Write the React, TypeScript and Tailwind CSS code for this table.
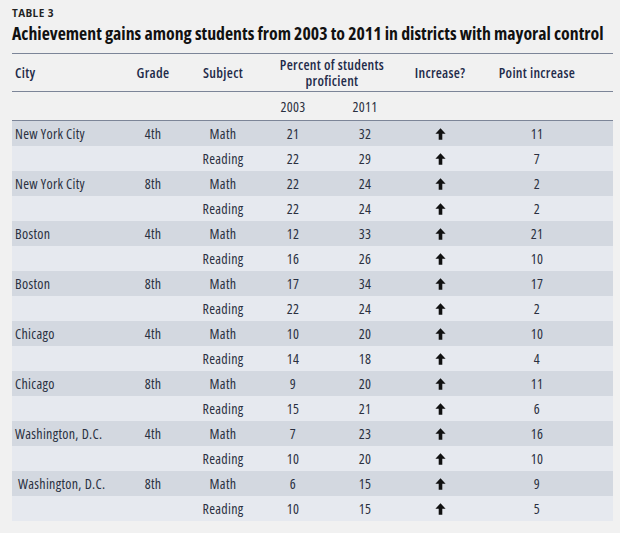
import React from 'react'

const rows = [
  { city: 'New York City', grade: '4th', subject: 'Math', a: '21', b: '32', inc: '11' },
  { city: '', grade: '', subject: 'Reading', a: '22', b: '29', inc: '7' },
  { city: 'New York City', grade: '8th', subject: 'Math', a: '22', b: '24', inc: '2' },
  { city: '', grade: '', subject: 'Reading', a: '22', b: '24', inc: '2' },
  { city: 'Boston', grade: '4th', subject: 'Math', a: '12', b: '33', inc: '21' },
  { city: '', grade: '', subject: 'Reading', a: '16', b: '26', inc: '10' },
  { city: 'Boston', grade: '8th', subject: 'Math', a: '17', b: '34', inc: '17' },
  { city: '', grade: '', subject: 'Reading', a: '22', b: '24', inc: '2' },
  { city: 'Chicago', grade: '4th', subject: 'Math', a: '10', b: '20', inc: '10' },
  { city: '', grade: '', subject: 'Reading', a: '14', b: '18', inc: '4' },
  { city: 'Chicago', grade: '8th', subject: 'Math', a: '9', b: '20', inc: '11' },
  { city: '', grade: '', subject: 'Reading', a: '15', b: '21', inc: '6' },
  { city: 'Washington, D.C.', grade: '4th', subject: 'Math', a: '7', b: '23', inc: '16' },
  { city: '', grade: '', subject: 'Reading', a: '10', b: '20', inc: '10' },
  { city: 'Washington, D.C.', grade: '8th', subject: 'Math', a: '6', b: '15', inc: '9', indent: true },
  { city: '', grade: '', subject: 'Reading', a: '10', b: '15', inc: '5' },
]

function UpArrow() {
  return (
    <svg width="11" height="12" viewBox="0 0 11 12" className="inline-block">
      <path d="M5.5 0.3 L10.6 5.8 L7.3 5.8 L7.3 11.8 L3.7 11.8 L3.7 5.8 L0.4 5.8 Z" fill="#111" />
    </svg>
  )
}

const cols = 'grid grid-cols-[108px_66px_74px_66px_78px_72px_122px_15px]'

export default function App() {
  return (
    <div className="w-[620px] h-[533px] bg-[#f1f1f1] px-3 pt-[7px] font-['Open_Sans',sans-serif]">
      <div className="text-[10px] font-bold tracking-[0.04em] text-[#222] leading-[12px]">TABLE 3</div>
      <h1 className="mt-[2px] text-[17.8px] font-bold text-[#111] leading-[24px] whitespace-nowrap font-stretch-condensed">
        Achievement gains among students from 2003 to 2011 in districts with mayoral control
      </h1>
      <div className="mt-[8px] w-[601px] border-t border-[#7c8598] font-stretch-condensed tracking-[0.3px]">
        <div className={`${cols} h-[38px] items-center text-[14px] font-semibold text-[#1f2b4a] border-b border-[#7c8598]`}>
          <div className="pl-[3px]">City</div>
          <div className="text-center">Grade</div>
          <div className="text-center">Subject</div>
          <div className="col-span-2 flex flex-col items-center leading-[16px]">
            <span>Percent of students</span>
            <span>proficient</span>
          </div>
          <div className="text-center whitespace-nowrap">Increase?</div>
          <div className="text-center">Point increase</div>
          <div />
        </div>
        <div className={`${cols} h-[29px] items-center text-[14px] text-[#2a3040] border-b border-[#7c8598]`}>
          <div />
          <div />
          <div />
          <div className="text-center">2003</div>
          <div className="text-center">2011</div>
          <div />
          <div />
          <div />
        </div>
        {rows.map((r, i) => (
          <div
            key={i}
            className={`${cols} h-[25px] items-center text-[14px] text-[#2a3040] ${r.city ? 'bg-[#d3d8e0]' : 'bg-[#e6e9ef]'}`}
          >
            <div className={r.indent ? 'pl-[6px] whitespace-nowrap' : 'pl-[3px] whitespace-nowrap'}>{r.city}</div>
            <div className="text-center">{r.grade}</div>
            <div className="text-center">{r.subject}</div>
            <div className="text-center">{r.a}</div>
            <div className="text-center">{r.b}</div>
            <div className="flex justify-center">
              <UpArrow />
            </div>
            <div className="text-center">{r.inc}</div>
            <div />
          </div>
        ))}
      </div>
    </div>
  )
}
